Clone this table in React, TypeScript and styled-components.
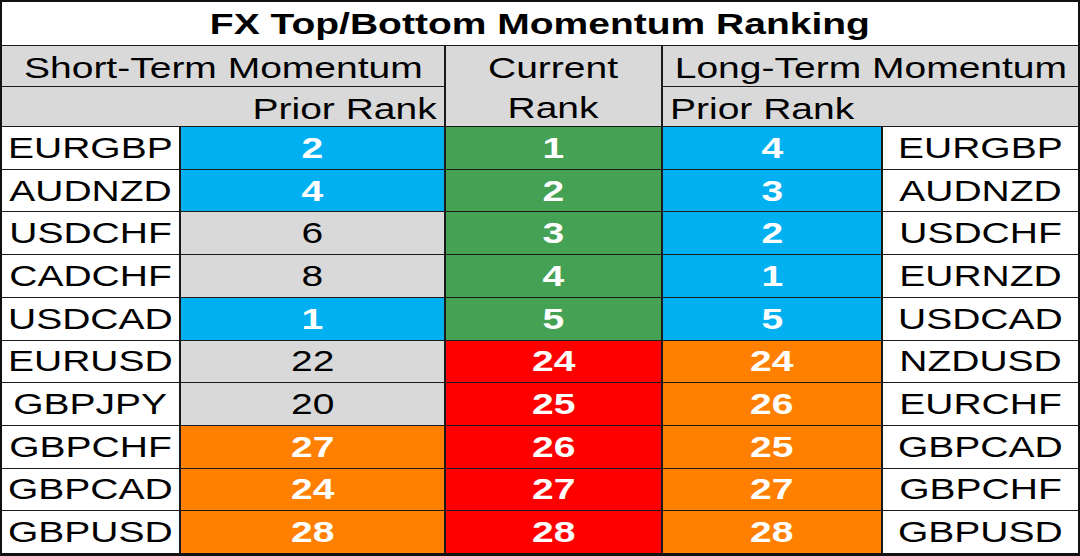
import { Fragment } from 'react';
import styled, { createGlobalStyle } from 'styled-components';

const GlobalStyle = createGlobalStyle`
  html, body {
    margin: 0;
    padding: 0;
    background: #ffffff;
  }
  * {
    box-sizing: border-box;
  }
`;

const colors = {
  blue: '#00b0f0',
  green: '#45a154',
  red: '#ff0000',
  orange: '#ff8000',
  gray: '#d9d9d9',
  white: '#ffffff',
};

type Tone = keyof typeof colors;

const Table = styled.div`
  width: 1080px;
  height: 556px;
  display: grid;
  grid-template-columns: 177px 263px 215px 218px 1fr;
  grid-template-rows: 43px 40px 39px repeat(10, 1fr);
  column-gap: 2px;
  row-gap: 1px;
  background: #1a1a1a;
  border: 2px solid #111;
  border-bottom-width: 3px;
  font-family: 'Liberation Sans', Arial, sans-serif;
  color: #000;
  overflow: hidden;
`;

const Title = styled.div`
  grid-column: 1 / -1;
  background: #fff;
  display: flex;
  align-items: center;
  justify-content: center;
  font-weight: 700;
  font-size: 30px;
`;

type HeadProps = { $align: 'left' | 'center' | 'right'; $col: string; $row?: string };

const Head = styled.div<HeadProps>`
  grid-column: ${p => p.$col};
  grid-row: ${p => p.$row ?? 'auto'};
  background: ${colors.gray};
  display: flex;
  align-items: center;
  justify-content: ${p => (p.$align === 'left' ? 'flex-start' : p.$align === 'right' ? 'flex-end' : 'center')};
  padding: 4px 7px 0;
  font-size: 30px;
`;

const Stack = styled.div`
  display: flex;
  flex-direction: column;
  align-items: center;
  line-height: 40px;
`;

type LabelProps = { $origin?: 'left' | 'center' | 'right' };

// the source image is stretched sideways, so the text is widened to match
const Label = styled.span<LabelProps>`
  display: inline-block;
  white-space: nowrap;
  transform: scaleX(1.3);
  transform-origin: ${p => p.$origin ?? 'center'} center;
`;

const Pair = styled.div`
  background: #fff;
  display: flex;
  align-items: center;
  justify-content: center;
  font-size: 30px;
`;

const Rank = styled.div<{ $tone: Tone }>`
  background: ${p => colors[p.$tone]};
  color: ${p => (p.$tone === 'gray' || p.$tone === 'white' ? '#000' : '#fff')};
  font-weight: ${p => (p.$tone === 'gray' || p.$tone === 'white' ? 400 : 700)};
  display: flex;
  align-items: center;
  justify-content: center;
  font-size: 30px;
`;

type Row = {
  left: string;
  st: number;
  stTone: Tone;
  cur: number;
  curTone: Tone;
  lt: number;
  ltTone: Tone;
  right: string;
};

const rows: Row[] = [
  { left: 'EURGBP', st: 2, stTone: 'blue', cur: 1, curTone: 'green', lt: 4, ltTone: 'blue', right: 'EURGBP' },
  { left: 'AUDNZD', st: 4, stTone: 'blue', cur: 2, curTone: 'green', lt: 3, ltTone: 'blue', right: 'AUDNZD' },
  { left: 'USDCHF', st: 6, stTone: 'gray', cur: 3, curTone: 'green', lt: 2, ltTone: 'blue', right: 'USDCHF' },
  { left: 'CADCHF', st: 8, stTone: 'gray', cur: 4, curTone: 'green', lt: 1, ltTone: 'blue', right: 'EURNZD' },
  { left: 'USDCAD', st: 1, stTone: 'blue', cur: 5, curTone: 'green', lt: 5, ltTone: 'blue', right: 'USDCAD' },
  { left: 'EURUSD', st: 22, stTone: 'gray', cur: 24, curTone: 'red', lt: 24, ltTone: 'orange', right: 'NZDUSD' },
  { left: 'GBPJPY', st: 20, stTone: 'gray', cur: 25, curTone: 'red', lt: 26, ltTone: 'orange', right: 'EURCHF' },
  { left: 'GBPCHF', st: 27, stTone: 'orange', cur: 26, curTone: 'red', lt: 25, ltTone: 'orange', right: 'GBPCAD' },
  { left: 'GBPCAD', st: 24, stTone: 'orange', cur: 27, curTone: 'red', lt: 27, ltTone: 'orange', right: 'GBPCHF' },
  { left: 'GBPUSD', st: 28, stTone: 'orange', cur: 28, curTone: 'red', lt: 28, ltTone: 'orange', right: 'GBPUSD' },
];

export default function App() {
  return (
    <>
      <GlobalStyle />
      <Table>
        <Title>
          <Label>FX Top/Bottom Momentum Ranking</Label>
        </Title>

        <Head $col="1 / 3" $align="center">
          <Label>Short-Term Momentum</Label>
        </Head>
        <Head $col="3" $row="2 / 4" $align="center">
          <Stack>
            <Label>Current</Label>
            <Label>Rank</Label>
          </Stack>
        </Head>
        <Head $col="4 / 6" $align="center">
          <Label>Long-Term Momentum</Label>
        </Head>
        <Head $col="1 / 3" $align="right">
          <Label $origin="right">Prior Rank</Label>
        </Head>
        <Head $col="4 / 6" $align="left">
          <Label $origin="left">Prior Rank</Label>
        </Head>

        {rows.map(r => (
          <Fragment key={r.left}>
            <Pair>
              <Label>{r.left}</Label>
            </Pair>
            <Rank $tone={r.stTone}>
              <Label>{r.st}</Label>
            </Rank>
            <Rank $tone={r.curTone}>
              <Label>{r.cur}</Label>
            </Rank>
            <Rank $tone={r.ltTone}>
              <Label>{r.lt}</Label>
            </Rank>
            <Pair>
              <Label>{r.right}</Label>
            </Pair>
          </Fragment>
        ))}
      </Table>
    </>
  );
}
